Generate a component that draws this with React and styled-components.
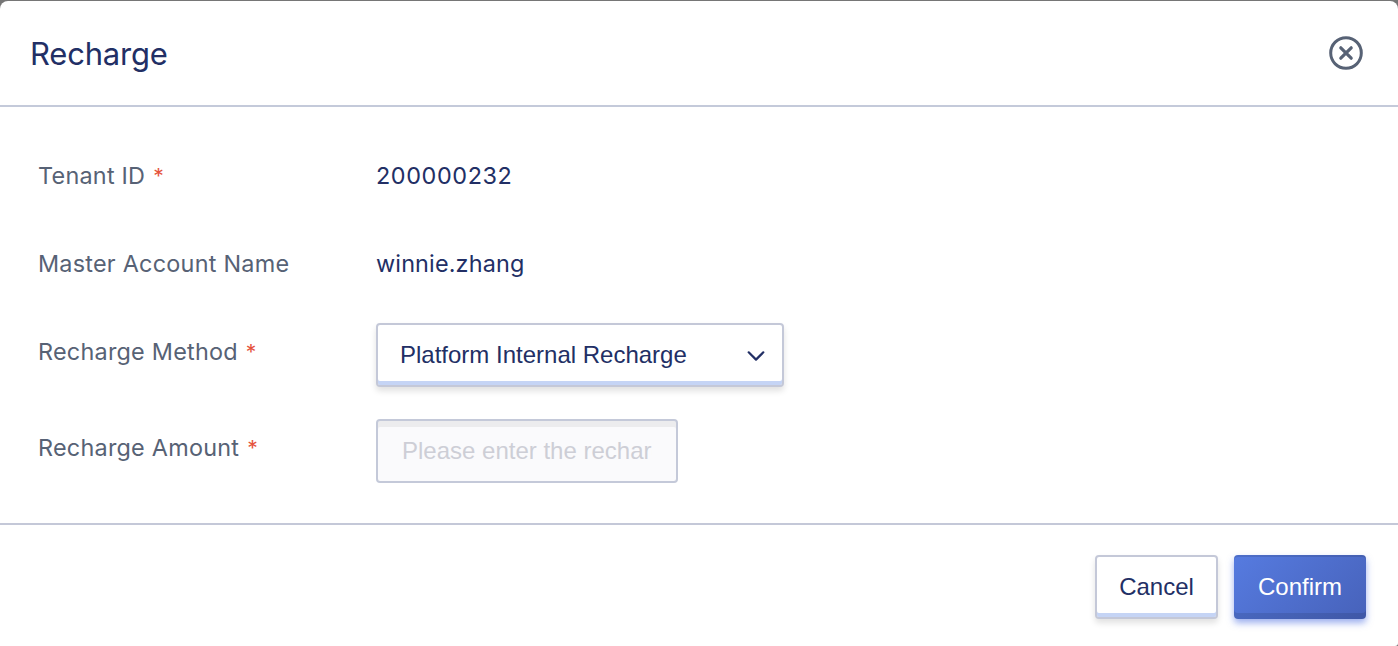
import React from "react";
import styled, { createGlobalStyle, css } from "styled-components";

const GlobalStyle = createGlobalStyle`
  *, *::before, *::after { box-sizing: border-box; }
  html, body { margin: 0; padding: 0; }
  body { background: #767676; overflow: hidden; }
`;

const Backdrop = styled.div`
  height: 646px;
  padding-top: 1px;
  background: #767676;
`;

const Dialog = styled.section`
  display: flex;
  flex-direction: column;
  height: 645px;
  background: #fff;
  border-radius: 8px 8px 3px 0;
  font-family: Inter, "Liberation Sans", sans-serif;
  color: #222f65;
`;

const Header = styled.header`
  display: flex;
  align-items: center;
  justify-content: space-between;
  height: 106px;
  padding: 0 34px 0 30px;
  border-bottom: 2px solid #c4cada;
`;

const Title = styled.h1`
  margin: 0;
  padding-top: 2px;
  font-size: 31px;
  font-weight: 400;
  line-height: 40px;
  letter-spacing: -0.2px;
`;

const CloseButton = styled.button`
  display: flex;
  padding: 0;
  border: 0;
  background: none;
  color: #576275;
`;

const Form = styled.div`
  flex: 1;
  display: flex;
  flex-direction: column;
  gap: 32px;
  padding: 40px 38px 0;
`;

const Row = styled.div`
  display: flex;
  align-items: flex-start;
  height: ${(p) => (p.$control ? 64 : 56)}px;
`;

const Label = styled.label`
  width: 338px;
  padding-top: 13px;
  font-size: 23.4px;
  line-height: 32px;
  letter-spacing: 0.24px;
  color: #576275;
  white-space: nowrap;
`;

const Required = styled.span`
  margin-left: 8px;
  font-size: 21px;
  line-height: 1;
  color: #e5533d;
`;

const Value = styled.span`
  padding-top: 13px;
  font-size: 23.4px;
  line-height: 32px;
  letter-spacing: ${(p) => p.$spacing}px;
`;

const controlText = css`
  font-family: "Liberation Sans", Arial, sans-serif;
  font-size: 24px;
  line-height: 32px;
`;

const raised = css`
  border: 2px solid #c4c8d8;
  border-radius: 4px;
  background: #fff;
  color: #222f65;
  box-shadow: inset 0 -4px 0 #c5d4f5, 0 4px 6px rgba(0, 0, 0, 0.12);
`;

const Select = styled.button`
  ${controlText}
  ${raised}
  display: flex;
  align-items: center;
  justify-content: space-between;
  width: 408px;
  height: 64px;
  padding: 0 16px 0 22px;
`;

const Input = styled.input`
  ${controlText}
  width: 302px;
  height: 64px;
  padding: 0 24px;
  border: 2px solid #c4c9d9;
  border-radius: 4px;
  background: #fafafc;
  box-shadow: inset 0 6px 0 #ececee;
  outline: 0;
  &::placeholder { color: #cdced6; opacity: 1; }
`;

const Footer = styled.footer`
  display: flex;
  justify-content: flex-end;
  gap: 16px;
  height: 123px;
  padding: 30px 32px 0;
  border-top: 2px solid #c4c8d8;
`;

const Button = styled.button`
  ${controlText}
  ${raised}
  width: 123px;
  height: 64px;
  padding: 0;
  ${(p) =>
    p.$primary &&
    css`
      width: 132px;
      border: 0;
      background: linear-gradient(135deg, #567be0, #4762ba);
      color: #fff;
      box-shadow: inset 0 2px 0 rgba(0, 0, 0, 0.1),
        inset 0 -6px 0 rgba(0, 0, 0, 0.1), 0 4px 7px rgba(75, 110, 225, 0.55);
    `}
`;

const CloseIcon = () => (
  <svg width="36" height="36" viewBox="0 0 36 36" fill="none" stroke="currentColor" strokeLinecap="round">
    <circle cx="18" cy="18" r="15.3" strokeWidth="3" />
    <path d="M12.8 12.8 23.2 23.2M23.2 12.8 12.8 23.2" strokeWidth="3.2" />
  </svg>
);

const ChevronIcon = () => (
  <svg width="20" height="20" viewBox="0 0 20 20" fill="none" stroke="currentColor" strokeWidth="2.2" strokeLinecap="round" strokeLinejoin="round">
    <path d="M2.7 7.3 10 14.6 17.3 7.3" />
  </svg>
);

function Field({ label, required, control, children }) {
  return (
    <Row $control={control}>
      <Label>
        {label}
        {required && <Required>*</Required>}
      </Label>
      {children}
    </Row>
  );
}

export default function App() {
  return (
    <Backdrop>
      <GlobalStyle />
      <Dialog role="dialog" aria-label="Recharge">
        <Header>
          <Title>Recharge</Title>
          <CloseButton aria-label="Close"><CloseIcon /></CloseButton>
        </Header>
        <Form>
          <Field label="Tenant ID" required><Value $spacing={0.6}>200000232</Value></Field>
          <Field label="Master Account Name"><Value $spacing={0.16}>winnie.zhang</Value></Field>
          <Field label="Recharge Method" required control>
            <Select type="button">Platform Internal Recharge<ChevronIcon /></Select>
          </Field>
          <Field label="Recharge Amount" required control>
            <Input placeholder="Please enter the recharge amount" />
          </Field>
        </Form>
        <Footer>
          <Button type="button">Cancel</Button>
          <Button type="button" $primary>Confirm</Button>
        </Footer>
      </Dialog>
    </Backdrop>
  );
}
